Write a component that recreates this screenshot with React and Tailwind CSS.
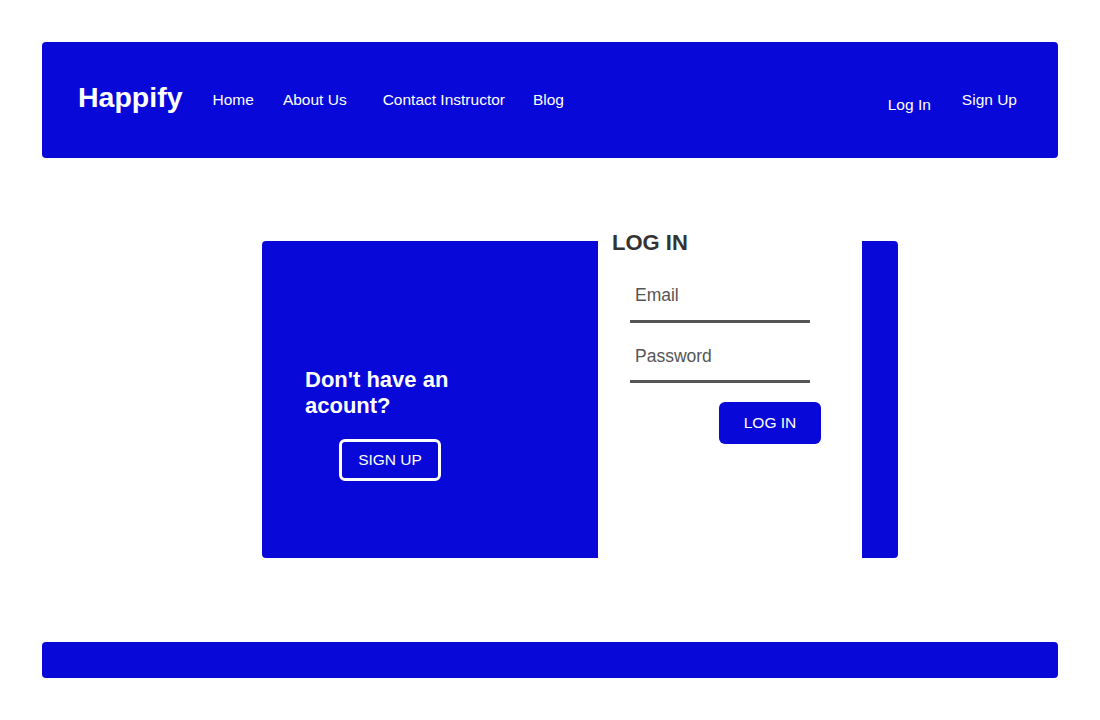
export default function App() {
  const blue = "bg-[#0808d8]";
  return (
    <div className="w-[1100px] h-[720px] bg-white px-[42px] pt-[42px] font-['Liberation_Sans',Arial,sans-serif]">
      <header className={`${blue} h-[116px] rounded-[4px] flex items-center pl-[36px] pr-[41px] text-white`}>
        <div className="text-[28.5px] font-bold leading-none -mt-[6px]">Happify</div>
        <nav className="flex items-center text-[15.5px] ml-[30px]">
          <a>Home</a>
          <a className="ml-[29px]">About Us</a>
          <a className="ml-[36px]">Contact Instructor</a>
          <a className="ml-[28px]">Blog</a>
        </nav>
        <div className="ml-auto flex items-center text-[15.5px]">
          <a className="mt-[10px]">Log In</a>
          <a className="ml-[31px]">Sign Up</a>
        </div>
      </header>

      <main className="mt-[83px] ml-[220px] flex h-[317px] w-[636px]">
        <section className={`${blue} w-[336px] rounded-l-[4px] text-white pl-[43px] pt-[126px]`}>
          <h2 className="text-[22px] font-bold leading-[26px] w-[190px]">Don't have an acount?</h2>
          <button className="mt-[20px] ml-[34px] w-[102px] h-[42px] border-[3px] border-white rounded-[6px] text-[15.5px] text-white">
            SIGN UP
          </button>
        </section>
        <section className="w-[264px] bg-white pl-[14px]">
          <h1 className="text-[22px] font-bold leading-[24px] text-[#333] -mt-[10px]">LOG IN</h1>
          <div className="ml-[18px] mt-[30px] w-[180px] border-b-[3px] border-[#555] pb-[15px] pl-[5px] text-[17.5px] leading-[20px] text-[#555]">
            Email
          </div>
          <div className="ml-[18px] mt-[23px] w-[180px] border-b-[3px] border-[#555] pb-[14px] pl-[5px] text-[17.5px] leading-[20px] text-[#555]">
            Password
          </div>
          <div className="flex justify-end w-[209px]">
            <button className={`${blue} mt-[19px] w-[102px] h-[42px] rounded-[6px] text-[15.5px] text-white`}>
              LOG IN
            </button>
          </div>
        </section>
        <section className={`${blue} w-[36px] rounded-r-[4px]`} />
      </main>

      <footer className={`${blue} mt-[84px] h-[36px] rounded-[4px]`} />
    </div>
  );
}
